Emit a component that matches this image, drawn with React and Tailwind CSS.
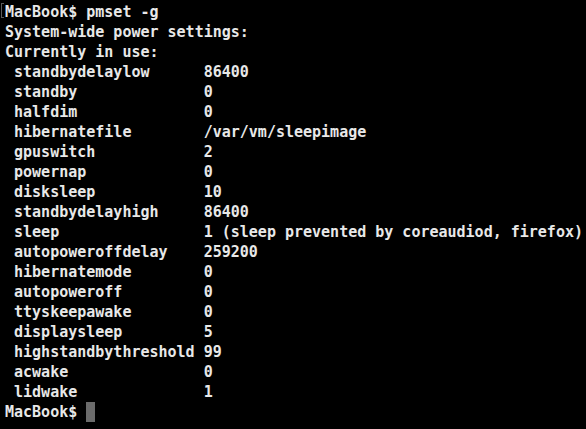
const settings = [
  ['standbydelaylow', '86400'],
  ['standby', '0'],
  ['halfdim', '0'],
  ['hibernatefile', '/var/vm/sleepimage'],
  ['gpuswitch', '2'],
  ['powernap', '0'],
  ['disksleep', '10'],
  ['standbydelayhigh', '86400'],
  ['sleep', '1 (sleep prevented by coreaudiod, firefox)'],
  ['autopoweroffdelay', '259200'],
  ['hibernatemode', '0'],
  ['autopoweroff', '0'],
  ['ttyskeepawake', '0'],
  ['displaysleep', '5'],
  ['highstandbythreshold', '99'],
  ['acwake', '0'],
  ['lidwake', '1'],
];

export default function App() {
  return (
    <div className="relative w-[586px] h-[429px] bg-black overflow-hidden">
      {/* mark bracket on the first prompt */}
      <div className="absolute left-[1px] top-[3px] w-[3px] h-[15px] border-l border-t border-b border-[#5a5a5a]" />
      <pre
        className="pl-[5px] pt-[2px] text-[15px] leading-[20px] font-bold text-[#e8e8e8] whitespace-pre"
        style={{ fontFamily: '"DejaVu Sans Mono", "Liberation Mono", monospace' }}
      >
        <div>MacBook$ pmset -g</div>
        <div>System-wide power settings:</div>
        <div>Currently in use:</div>
        {settings.map(([k, v]) => (
          <div key={k}>{' ' + k.padEnd(21) + v}</div>
        ))}
        <div className="flex items-center">
          <span>MacBook$ </span>
          <span className="inline-block w-[9px] h-[20px] bg-[#6b6b6b]" />
        </div>
      </pre>
    </div>
  );
}
